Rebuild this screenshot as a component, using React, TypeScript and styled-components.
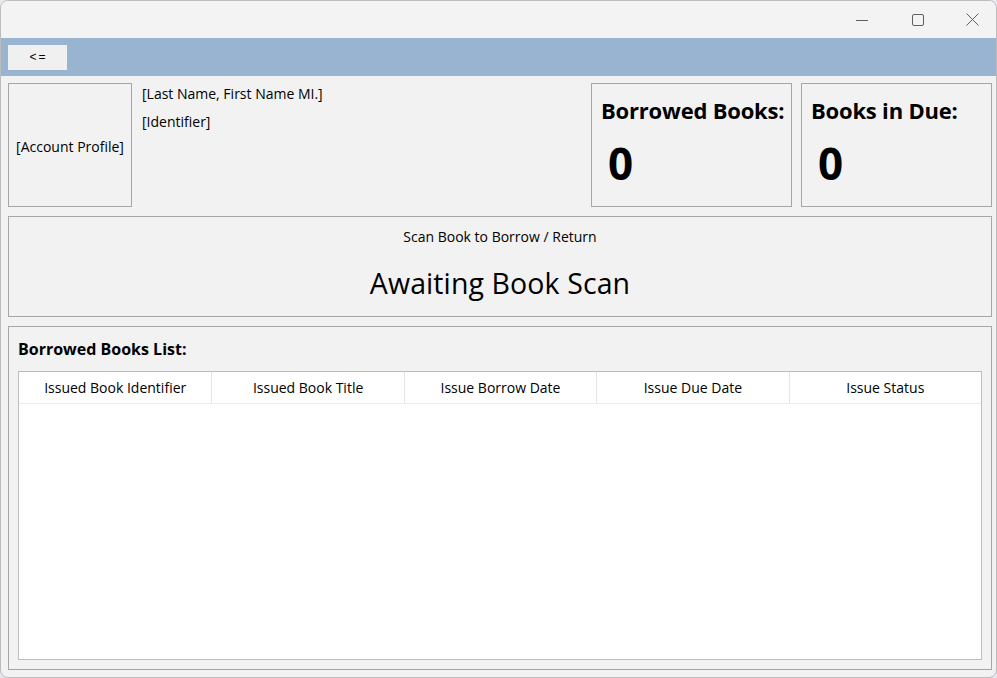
import React from "react";
import styled, { createGlobalStyle } from "styled-components";

const Global = createGlobalStyle`
  html, body { margin: 0; padding: 0; background: #e8e8ec; }
  body { font-family: "Open Sans", "Noto Sans", sans-serif; color: #000; }
  #root { width: 997px; height: 678px; }
`;

const Window = styled.div`
  box-sizing: border-box;
  width: 997px;
  height: 678px;
  border: 1px solid #bcbcbc;
  border-radius: 8px;
  background: #f2f2f2;
  overflow: hidden;
  display: flex;
  flex-direction: column;
`;

const TitleBar = styled.div`
  height: 37px;
  display: flex;
  justify-content: flex-end;
  align-items: stretch;
  background: #f3f3f3;
`;

const CaptionButton = styled.div<{ $w: number }>`
  width: ${(p) => p.$w}px;
  display: flex;
  align-items: center;
  justify-content: center;
  color: #606060;
`;

const Toolbar = styled.div`
  height: 38px;
  background: #99b4d1;
  display: flex;
  align-items: center;
  padding-left: 7px;
`;

const BackButton = styled.div`
  width: 59px;
  height: 25px;
  background: #f0f0f0;
  display: flex;
  align-items: center;
  justify-content: center;
  font-family: "Liberation Sans", Arial, sans-serif;
  font-size: 12px;
  letter-spacing: 2px;
  padding-left: 2px;
  box-sizing: border-box;
`;

const Content = styled.div`
  flex: 1;
  display: flex;
  flex-direction: column;
  gap: 9px;
  padding: 7px 4px 7px 7px;
`;

const TopRow = styled.div`
  height: 124px;
  display: flex;
`;

const Box = styled.div`
  box-sizing: border-box;
  border: 1px solid #a6a6a6;
  background: #f2f2f2;
`;

const ProfileBox = styled(Box)`
  width: 124px;
  display: flex;
  align-items: center;
  justify-content: center;
  font-size: 14px;
  padding-top: 2px;
`;

const Info = styled.div`
  flex: 1;
  padding: 1px 0 0 10px;
  display: flex;
  flex-direction: column;
  gap: 8px;
  font-size: 14px;
  line-height: 20px;
`;

const StatBox = styled(Box)<{ $w: number }>`
  width: ${(p) => p.$w}px;
  margin-left: 9px;
  padding: 11px 0 0 9px;
`;

const StatTitle = styled.div`
  font-size: 22px;
  font-weight: 700;
  line-height: 30px;
  white-space: nowrap;
  letter-spacing: -0.2px;
`;

const StatValue = styled.div`
  font-size: 44px;
  font-weight: 700;
  line-height: 54px;
  padding-left: 7px;
  margin-top: 11px;
`;

const ScanBox = styled(Box)`
  height: 101px;
  display: flex;
  flex-direction: column;
  align-items: center;
  padding-top: 10px;
`;

const ScanLabel = styled.div`
  font-size: 14px;
  line-height: 20px;
`;

const ScanStatus = styled.div`
  font-size: 28.5px;
  line-height: 40px;
  margin-top: 16px;
  letter-spacing: 0.1px;
`;

const ListBox = styled(Box)`
  flex: 1;
  display: flex;
  flex-direction: column;
  padding: 11px 9px 9px 9px;
`;

const ListTitle = styled.div`
  font-size: 16px;
  font-weight: 700;
  line-height: 22px;
  margin-bottom: 11px;
`;

const Table = styled.div`
  flex: 1;
  box-sizing: border-box;
  border: 1px solid #bdbdbd;
  background: #fff;
`;

const HeaderRow = styled.div`
  display: grid;
  grid-template-columns: repeat(5, 1fr);
  height: 31px;
  border-bottom: 1px solid #ececec;
`;

const HeaderCell = styled.div`
  display: flex;
  align-items: center;
  justify-content: center;
  font-size: 14px;
  border-left: 1px solid #e5e5e5;
  &:first-child { border-left: none; }
`;

export default function App() {
  return (
    <>
      <Global />
      <Window>
        <TitleBar>
          <CaptionButton $w={52}>
            <svg width="12" height="12" viewBox="0 0 12 12">
              <line x1="0" y1="6.5" x2="12" y2="6.5" stroke="#5f5f5f" strokeWidth="1" />
            </svg>
          </CaptionButton>
          <CaptionButton $w={60}>
            <svg width="12" height="12" viewBox="0 0 12 12">
              <rect x="0.5" y="0.5" width="11" height="11" rx="1.5" fill="none" stroke="#5f5f5f" strokeWidth="1" />
            </svg>
          </CaptionButton>
          <CaptionButton $w={48}>
            <svg width="13" height="13" viewBox="0 0 13 13">
              <path d="M0.5 0.5 L12.5 12.5 M12.5 0.5 L0.5 12.5" stroke="#5f5f5f" strokeWidth="1" />
            </svg>
          </CaptionButton>
        </TitleBar>
        <Toolbar>
          <BackButton>&lt;=</BackButton>
        </Toolbar>
        <Content>
          <TopRow>
            <ProfileBox>[Account Profile]</ProfileBox>
            <Info>
              <div>[Last Name, First Name MI.]</div>
              <div>[Identifier]</div>
            </Info>
            <StatBox $w={201}>
              <StatTitle>Borrowed Books:</StatTitle>
              <StatValue>0</StatValue>
            </StatBox>
            <StatBox $w={191}>
              <StatTitle>Books in Due:</StatTitle>
              <StatValue>0</StatValue>
            </StatBox>
          </TopRow>
          <ScanBox>
            <ScanLabel>Scan Book to Borrow / Return</ScanLabel>
            <ScanStatus>Awaiting Book Scan</ScanStatus>
          </ScanBox>
          <ListBox>
            <ListTitle>Borrowed Books List:</ListTitle>
            <Table>
              <HeaderRow>
                <HeaderCell>Issued Book Identifier</HeaderCell>
                <HeaderCell>Issued Book Title</HeaderCell>
                <HeaderCell>Issue Borrow Date</HeaderCell>
                <HeaderCell>Issue Due Date</HeaderCell>
                <HeaderCell>Issue Status</HeaderCell>
              </HeaderRow>
            </Table>
          </ListBox>
        </Content>
      </Window>
    </>
  );
}
